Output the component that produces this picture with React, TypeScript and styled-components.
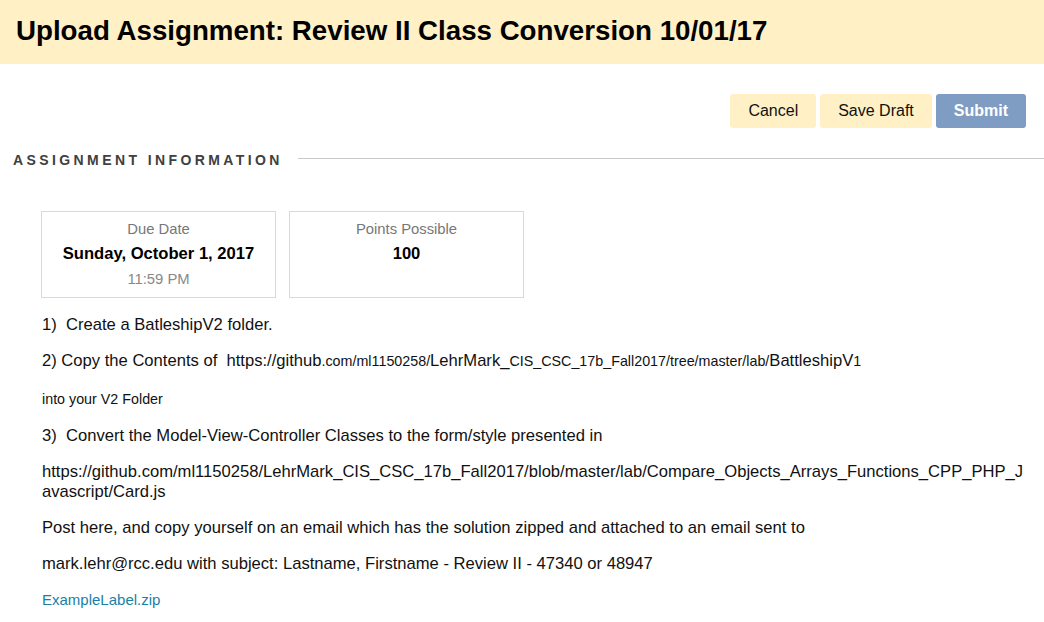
import React from 'react';
import styled, { createGlobalStyle } from 'styled-components';

const GlobalStyle = createGlobalStyle`
  body {
    margin: 0;
    background: #ffffff;
    font-family: "Liberation Sans", Arial, sans-serif;
    color: #000;
  }
`;

const Header = styled.header`
  background: #fff0c6;
  height: 64px;
  box-sizing: border-box;
  display: flex;
  align-items: center;
  padding: 0 16px 3px;
`;

const Title = styled.h1`
  margin: 0;
  font-size: 27.7px;
  font-weight: bold;
  color: #000;
`;

const Toolbar = styled.div`
  display: flex;
  justify-content: flex-end;
  gap: 4px;
  padding: 30px 18px 0 0;
`;

const ActionButton = styled.button<{ $primary?: boolean }>`
  height: 34px;
  padding: 0 18px;
  border: none;
  border-radius: 3px;
  font-family: "Liberation Sans", Arial, sans-serif;
  font-size: 16px;
  font-weight: ${p => (p.$primary ? 'bold' : 'normal')};
  background: ${p => (p.$primary ? '#7f9cc3' : '#fff0c6')};
  color: ${p => (p.$primary ? '#ffffff' : '#111')};
`;

const SectionHeading = styled.div`
  display: flex;
  align-items: center;
  gap: 15px;
  margin-top: 24px;
  padding-left: 13px;
`;

const SectionLabel = styled.h2`
  margin: 0;
  font-size: 14px;
  font-weight: bold;
  letter-spacing: 3.4px;
  color: #404040;
  white-space: nowrap;
`;

const SectionRule = styled.div`
  flex: 1;
  height: 1px;
  background: #c8c8c8;
  margin-top: -4px;
`;

const Content = styled.div`
  padding: 43px 0 0 41px;
`;

const Cards = styled.div`
  display: flex;
  gap: 13px;
`;

const Card = styled.div`
  width: 235px;
  height: 87px;
  border: 1px solid #d9d9d9;
  box-sizing: border-box;
  display: flex;
  flex-direction: column;
  align-items: center;
  padding-top: 8px;
`;

const CardLabel = styled.div`
  font-size: 14.8px;
  color: #777;
  line-height: 18px;
`;

const CardValue = styled.div`
  font-size: 16.6px;
  font-weight: bold;
  line-height: 20px;
  margin-top: 6px;
  color: #000;
`;

const CardSub = styled.div`
  font-size: 14.8px;
  color: #888;
  line-height: 18px;
  margin-top: 6px;
`;

const Body = styled.div`
  padding-left: 1px;
  padding-right: 18px;
  margin-top: 17px;
`;

const Para = styled.p<{ $small?: boolean }>`
  margin: ${p => (p.$small ? '0 0 17px' : '0 0 16px')};
  padding-top: ${p => (p.$small ? '2px' : '0')};
  font-size: ${p => (p.$small ? '14.3px' : '16.6px')};
  line-height: 20px;
  color: #111;
  word-break: break-all;
`;

const Small = styled.span`
  font-size: 14.3px;
`;

const FileLink = styled.a`
  font-size: 15px;
  color: #1a7fa6;
  text-decoration: none;
  line-height: 20px;
`;

export default function App() {
  return (
    <>
      <GlobalStyle />
      <Header>
        <Title>Upload Assignment: Review II Class Conversion 10/01/17</Title>
      </Header>
      <Toolbar>
        <ActionButton>Cancel</ActionButton>
        <ActionButton>Save Draft</ActionButton>
        <ActionButton $primary>Submit</ActionButton>
      </Toolbar>
      <SectionHeading>
        <SectionLabel>ASSIGNMENT INFORMATION</SectionLabel>
        <SectionRule />
      </SectionHeading>
      <Content>
        <Cards>
          <Card>
            <CardLabel>Due Date</CardLabel>
            <CardValue>Sunday, October 1, 2017</CardValue>
            <CardSub>11:59 PM</CardSub>
          </Card>
          <Card>
            <CardLabel>Points Possible</CardLabel>
            <CardValue>100</CardValue>
          </Card>
        </Cards>
        <Body>
          <Para>1)&nbsp; Create a BatleshipV2 folder.</Para>
          <Para>
            2) Copy the Contents of&nbsp; https://github<Small>.com/ml1150258/</Small>LehrMark_
            <Small>CIS_CSC_17b_Fall2017/tree/master/lab/</Small>BattleshipV<Small>1</Small>
          </Para>
          <Para $small>into your V2 Folder</Para>
          <Para>3)&nbsp; Convert the Model-View-Controller Classes to the form/style presented in</Para>
          <Para>
            https://github.com/ml1150258/LehrMark_CIS_CSC_17b_Fall2017/blob/master/lab/Compare_Objects_Arrays_Functions_CPP_PHP_Javascript/Card.js
          </Para>
          <Para>Post here, and copy yourself on an email which has the solution zipped and attached to an email sent to</Para>
          <Para>mark.lehr@rcc.edu with subject: Lastname, Firstname - Review II - 47340 or 48947</Para>
          <FileLink href="#">ExampleLabel.zip</FileLink>
        </Body>
      </Content>
    </>
  );
}
